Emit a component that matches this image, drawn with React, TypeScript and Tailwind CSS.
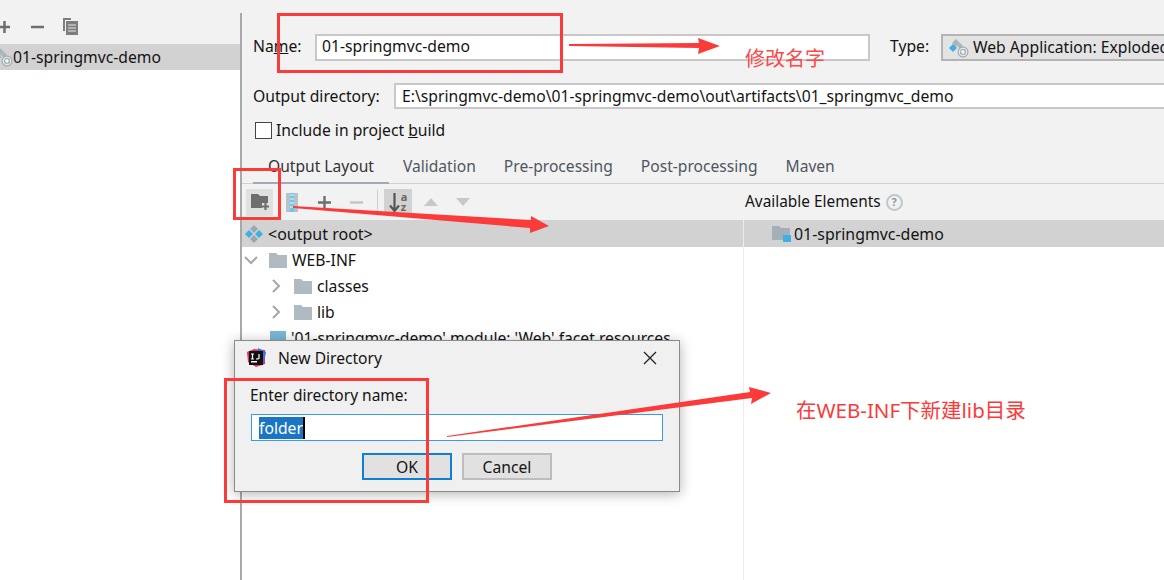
import React from "react";

const font = { fontFamily: '"Noto Sans", "Noto Sans CJK SC", sans-serif' };

function Chevron({ open }: { open?: boolean }) {
  return (
    <svg width="14" height="14" viewBox="0 0 14 14" fill="none" stroke="#a4a8ab" strokeWidth="2">
      {open ? <path d="M1 4 L7 10 L13 4" /> : <path d="M4 1 L10 7 L4 13" />}
    </svg>
  );
}

function Folder() {
  return (
    <svg width="18" height="15" viewBox="0 0 18 15" fill="#afbac2">
      <path d="M0 0 H7 L9 2 H18 V15 H0 Z" />
    </svg>
  );
}

function WebIcon() {
  return (
    <svg width="20" height="20" viewBox="0 0 20 20">
      <path d="M7 1 L11 5 L7 9 L3 5 Z" fill="#a9b4bb" />
      <path d="M4 6 L8 10 L4 14 L0 10 Z" fill="#3fb0e3" />
      <path d="M11 5 L14 8 L11 11 L8.500 8 Z" fill="#a9b4bb" />
      <circle cx="14" cy="14" r="5.500" fill="#a3aeb5" />
      <circle cx="14" cy="14" r="3.800" fill="none" stroke="#f4f4f4" strokeWidth="1" />
      <path d="M11.500 13 L14.500 12 L16 14 L14 16.500 Z" fill="#f4f4f4" />
    </svg>
  );
}

function Tab({ label, active }: { label: string; active?: boolean }) {
  return (
    <div className={active ? "h-[30px] pt-[2px] px-[15px] border-b-2 border-[#a1a9b8] text-[#333]" : "h-[30px] pt-[2px] px-[14px] text-[#4f5660]"}>
      {label}
    </div>
  );
}

function TreeRow({ indent, chevron, open, label, children }: { indent: string; chevron?: boolean; open?: boolean; label: string; children: React.ReactNode }) {
  return (
    <div className={`h-[26px] flex items-center whitespace-nowrap ${indent}`}>
      {chevron ? (
        <span className="w-[25px] flex-none flex">
          <Chevron open={open} />
        </span>
      ) : null}
      <span className="flex-none mr-[5px] flex">{children}</span>
      <span className="pb-[1px]">{label}</span>
    </div>
  );
}

export default function App() {
  return (
    <div style={font} className="relative flex w-[1164px] h-[580px] overflow-hidden bg-[#f2f2f2] text-[15.700px] leading-[20px] text-[#141414]">
      {/* left panel */}
      <div className="w-[240px] flex-none flex flex-col">
        <div className="h-[44px] flex-none flex items-center">
          <svg width="80" height="20" viewBox="0 0 80 20" className="mt-[10px] flex-none" fill="none">
            <path d="M-1 10 H10 M4.500 4 V16" stroke="#6e6e6e" strokeWidth="2.500" />
            <path d="M31 10 H44" stroke="#6e6e6e" strokeWidth="2.500" />
            <path d="M63 1 H71 V3 H65 V14 H63 Z" fill="#7d7d7d" />
            <path d="M66 4 H78 V18 H66 Z" fill="#7d7d7d" />
            <path d="M68 8 H76 M68 11 H76 M68 14 H76" stroke="#e8e8e8" strokeWidth="1" />
          </svg>
        </div>
        <div className="flex-1 bg-white">
          <div className="h-[26px] bg-[#d2d2d2] flex items-center whitespace-nowrap">
            <span className="-ml-[7px] flex-none flex">
              <WebIcon />
            </span>
            <span>01-springmvc-demo</span>
          </div>
        </div>
      </div>

      <div className="w-[2px] flex-none mt-[13px] bg-[#a9a9a9]" />

      {/* right panel */}
      <div className="flex-1 min-w-0 flex flex-col overflow-hidden">
        <div className="h-[34px] flex-none" />
        <div className="flex-none h-[27px] flex items-center pl-[11px] whitespace-nowrap">
          <span className="w-[62px] flex-none pb-[3px]">
            Na<span className="underline">m</span>e:
          </span>
          <div className="w-[555px] flex-none h-[27px] bg-white border-2 border-[#c8c8c8] pl-[5px] pb-[3px] flex items-center">01-springmvc-demo</div>
          <span className="ml-[20px] w-[51px] flex-none pb-[3px]">Type:</span>
          <div className="w-[260px] flex-none h-[27px] bg-[#e3e3e3] border-2 border-[#b4b4b4] flex items-center pl-[6px] gap-[4px]">
            <WebIcon />
            <span className="pb-[1px]">Web Application: Exploded</span>
          </div>
        </div>
        <div className="flex-none h-[26px] mt-[22px] flex items-center pl-[11px] whitespace-nowrap">
          <span className="w-[141px] flex-none">Output directory:</span>
          <div className="w-[800px] flex-none h-[26px] bg-white border-2 border-[#c8c8c8] pl-[6px] flex items-center">
            E:\springmvc-demo\01-springmvc-demo\out\artifacts\01_springmvc_demo
          </div>
        </div>
        <div className="flex-none h-[17px] mt-[13px] flex items-center pl-[13px] whitespace-nowrap">
          <span className="w-[17px] h-[17px] flex-none border-[1.500px] border-[#444] bg-white" />
          <span className="ml-[4px] pb-[1px]">
            Include in project <span className="underline">b</span>uild
          </span>
        </div>
        {/* tabs */}
        <div className="flex-none h-[30px] mt-[15px] flex border-b border-[#d0d0d0] whitespace-nowrap text-[15.600px]">
          <div className="w-[11px] flex-none" />
          <Tab label="Output Layout" active />
          <Tab label="Validation" />
          <Tab label="Pre-processing" />
          <Tab label="Post-processing" />
          <Tab label="Maven" />
        </div>
        {/* toolbar */}
        <div className="flex-none h-[36px] flex items-center">
          <div className="w-[503px] flex-none flex items-center pl-[4px]">
            <div className="w-[27px] h-[27px] bg-[#e0e0e0] flex-none flex items-center justify-center">
              <svg width="19" height="16" viewBox="0 0 19 16" className="ml-[2px]">
                <path d="M0 0 H7 L9 2 H17 V9 H11 V14 H0 Z" fill="#6e6e6e" />
                <path d="M14.500 9 V16 M11 12.500 H18" stroke="#6e6e6e" strokeWidth="2.200" />
              </svg>
            </div>
            <svg width="12" height="19" viewBox="0 0 12 19" className="ml-[13px] flex-none">
              <rect x="0" y="0" width="12" height="19" fill="#b8c2c9" />
              <rect x="4" y="0" width="4" height="19" fill="#6ec6ec" />
              <path d="M4 2 H8 M4 6 H8 M4 10 H8 M4 14 H8" stroke="#f2f2f2" strokeWidth="1" />
            </svg>
            <svg width="13" height="13" viewBox="0 0 13 13" className="ml-[20px] flex-none">
              <path d="M0 6.500 H13 M6.500 0 V13" stroke="#6e6e6e" strokeWidth="2.400" />
            </svg>
            <svg width="13" height="13" viewBox="0 0 13 13" className="ml-[19px] flex-none">
              <path d="M0 6.500 H13" stroke="#c4c4c4" strokeWidth="2.400" />
            </svg>
            <div className="w-px h-[24px] bg-[#cfcfcf] ml-[14px] flex-none" />
            <div className="w-[28px] h-[26px] bg-[#d2d2d2] ml-[6px] flex-none flex items-center justify-center gap-[1px] text-[#666] font-bold">
              <svg width="11" height="19" viewBox="0 0 11 19" className="flex-none">
                <path d="M5.500 0 V17 M1 12.500 L5.500 18 L10 12.500" stroke="#555" strokeWidth="2.200" fill="none" />
              </svg>
              <div className="flex flex-col">
                <span className="h-[10px] leading-[10px] text-[11px]">a</span>
                <span className="h-[10px] leading-[10px] text-[11px]">z</span>
              </div>
            </div>
            <svg width="14" height="8" viewBox="0 0 14 8" className="ml-[12px] flex-none">
              <path d="M0 8 L7 0 L14 8 Z" fill="#c8c8c8" />
            </svg>
            <svg width="14" height="8" viewBox="0 0 14 8" className="ml-[18px] flex-none">
              <path d="M0 0 L14 0 L7 8 Z" fill="#c8c8c8" />
            </svg>
          </div>
          <span className="whitespace-nowrap text-[15.400px]">Available Elements</span>
          <span className="ml-[5px] w-[17px] h-[17px] rounded-full border-2 border-[#c0c6ca] text-[#8f979c] text-[11px] font-bold flex items-center justify-center">?</span>
        </div>
        {/* panes */}
        <div className="flex-1 min-h-0 flex">
          <div className="w-[501px] flex-none bg-white">
            <div className="h-[27px] bg-[#d2d2d2] flex items-center whitespace-nowrap pl-[2px]">
              <svg width="20" height="20" viewBox="0 0 20 20" className="mr-[4px] flex-none">
                <path d="M10 1 L14 5 L10 9 L6 5 Z" fill="#9aa7ae" />
                <path d="M5 6 L9 10 L5 14 L1 10 Z" fill="#3fb0e3" />
                <path d="M15 6 L19 10 L15 14 L11 10 Z" fill="#3fb0e3" />
                <path d="M10 11 L14 15 L10 19 L6 15 Z" fill="#9aa7ae" />
              </svg>
              <span className="text-[16px]">&lt;output root&gt;</span>
            </div>
            <TreeRow indent="pl-[2px]" chevron open label="WEB-INF">
              <Folder />
            </TreeRow>
            <TreeRow indent="pl-[27px]" chevron label="classes">
              <Folder />
            </TreeRow>
            <TreeRow indent="pl-[27px]" chevron label="lib">
              <Folder />
            </TreeRow>
            <TreeRow indent="pl-[28px]" label="'01-springmvc-demo' module: 'Web' facet resources">
              <span className="w-[16px] h-[14px] bg-[#7ab8d8] block" />
            </TreeRow>
          </div>
          <div className="w-px flex-none bg-[#ececec]" />
          <div className="flex-1 min-w-0 bg-white">
            <div className="h-[27px] bg-[#d2d2d2] flex items-center whitespace-nowrap pl-[28px]">
              <svg width="19" height="17" viewBox="0 0 19 17" className="mr-[3px] flex-none">
                <path d="M0 1 H7 L9 3 H18 V15 H0 Z" fill="#a4afb7" />
                <rect x="11" y="10" width="8" height="7" fill="#3fb0e3" />
              </svg>
              <span className="text-[15.900px]">01-springmvc-demo</span>
            </div>
          </div>
        </div>
      </div>

      {/* dialog */}
      <div className="absolute left-[234px] top-[340px] w-[446px] h-[152px] bg-[#f0f0f0] border border-[#8a8a8a] shadow-[0_2px_12px_rgba(0,0,0,0.3)] flex flex-col">
        <div className="h-[34px] flex-none flex items-center pl-[11px] pr-[22px]">
          <svg width="20" height="20" viewBox="0 0 20 20" className="flex-none">
            <path d="M1 4 L8 1 L19 2 L19 16 L10 19 L2 14 Z" fill="#e0316c" />
            <path d="M12 0 L20 4 L18 14 L12 8 Z" fill="#3b6fe0" />
            <rect x="3" y="3" width="14" height="14" fill="#111" />
            <rect x="5" y="13" width="6" height="1.500" fill="#fff" />
            <path d="M5 6 H8 M6.500 6 V11 M5 11 H8 M13 6 V10 Q13 11 10 11" stroke="#fff" strokeWidth="1.200" fill="none" />
          </svg>
          <span className="ml-[12px] flex-1 text-[15.600px]">New Directory</span>
          <svg width="14" height="14" viewBox="0 0 14 14" fill="none" stroke="#222" strokeWidth="1.300">
            <path d="M1 1 L13 13 M13 1 L1 13" />
          </svg>
        </div>
        <div className="pl-[16px] pr-[16px] mt-[10px]">
          <div className="h-[20px] text-[15.500px] ml-[-1px]">Enter directory name:</div>
          <div className="mt-[9px] h-[27px] bg-white border border-[#3c9ae0] pl-[7px] flex items-center">
            <span className="bg-[#1a75c4] text-white border-r-2 border-black leading-[22px]">folder</span>
          </div>
          <div className="mt-[12px] flex gap-[10px] pl-[111px]">
            <div className="w-[90px] h-[27px] bg-[#e1e1e1] border-2 border-[#0f7fd6] flex items-center justify-center">OK</div>
            <div className="w-[90px] h-[27px] bg-[#e1e1e1] border-2 border-[#bdbdbd] flex items-center justify-center">Cancel</div>
          </div>
        </div>
      </div>

      {/* annotations */}
      <div className="absolute left-[277px] top-[13px] w-[286px] h-[60px] border-[3px] border-[#fb3a3a]" />
      <div className="absolute left-[233px] top-[168px] w-[48px] h-[52px] border-[3px] border-[#fb3a3a]" />
      <div className="absolute left-[224px] top-[378px] w-[205px] h-[125px] border-[3px] border-[#fb3a3a]" />
      <svg className="absolute left-0 top-0" width="1164" height="580" fill="#fb3a3a">
        <polygon points="569,44 699,43 698,38 720,46 698,54 699,48 569,46" />
        <polygon points="293,206 531,220 531,216 549,226 530,233 530,228 293,208" />
        <polygon points="447,437 752,398 751,404 771,393 749,387 750,392 447,436" />
      </svg>
      <span className="absolute left-[745px] top-[47px] text-[20px] leading-[24px] text-[#fb4a4a] whitespace-nowrap">修改名字</span>
      <span className="absolute left-[796px] top-[398px] text-[20.500px] leading-[24px] text-[#fb3a3a] whitespace-nowrap">在WEB-INF下新建lib目录</span>
    </div>
  );
}
